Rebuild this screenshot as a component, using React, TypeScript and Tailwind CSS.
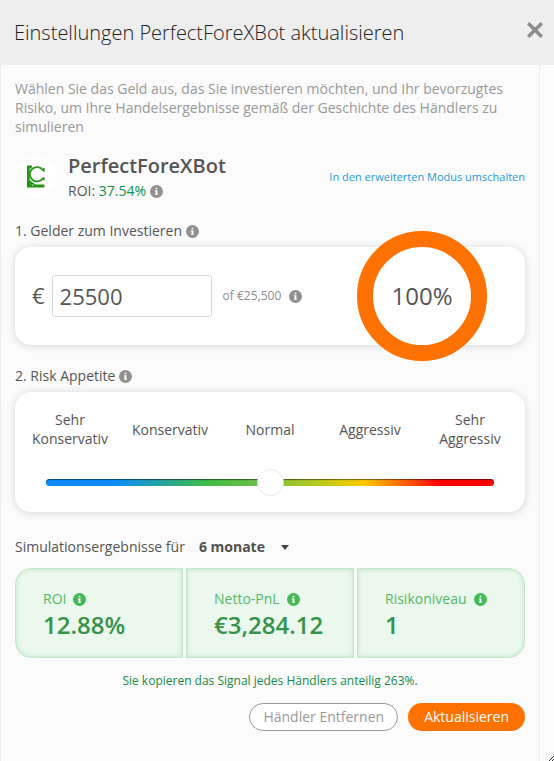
import { useState } from "react"

const riskLevels = ["Sehr Konservativ", "Konservativ", "Normal", "Aggressiv", "Sehr Aggressiv"]

const results = [
  { label: "ROI", value: "12.88%", shape: "rounded-l-2xl" },
  { label: "Netto-PnL", value: "€3,284.12", shape: "" },
  { label: "Risikoniveau", value: "1", shape: "rounded-r-2xl" },
]

function InfoIcon({ className = "text-[#909090]" }: { className?: string }) {
  return (
    <svg viewBox="0 0 13 13" className={`size-[13px] shrink-0 ${className}`} aria-hidden="true">
      <circle cx="6.5" cy="6.5" r="6.5" fill="currentColor" />
      <path d="M5.6 2.8h1.8v1.5H5.6zM5 5.3h2.4v3.4H8v1.1H5V8.7h.6V6.4H5z" fill="#fff" />
    </svg>
  )
}

function BotLogo() {
  return (
    <div className="flex size-[42px] shrink-0 items-center justify-center rounded-full bg-white">
      <svg viewBox="0 0 18 23" className="mb-[2px] h-[23px] w-[18px]" fill="none" aria-hidden="true">
        <path d="M0 .6h2.6v18.8h14.8v3H0z" fill="#249414" />
        <path d="M2 14.5l3 2.6 4 2.6H2z" fill="#249414" />
        <path d="M16.2 5.6A7.2 7.2 0 1 0 16.2 13" stroke="#2a981b" strokeWidth="1.8" />
        <path d="M16.8 3v3.8M16.8 12.2v3" stroke="#1c7a10" strokeWidth="1.4" />
        <path d="M2.4 4.4V.6h2.4v1.6z" fill="#1c7a10" />
        <path d="M5 20.2h1.4" stroke="#d4f0cc" />
      </svg>
    </div>
  )
}

export default function App() {
  const [amount, setAmount] = useState("25500")
  const [risk, setRisk] = useState(2)
  const [period, setPeriod] = useState("6")

  return (
    <div className="relative flex min-h-screen flex-col bg-[#fbfbfb] font-['Open_Sans','Noto_Sans',sans-serif] text-sm text-[#555]">
      <header className="flex h-[65px] items-center justify-between bg-[#eee] pr-[11px] pl-[14px]">
        <h1 className="text-xl font-light text-[#222]">Einstellungen PerfectForeXBot aktualisieren</h1>
        <button type="button" aria-label="Schließen" className="mb-[5px] text-[#8c8c8c]">
          <svg viewBox="0 0 16 16" className="size-4" stroke="currentColor" strokeWidth="3.4">
            <path d="M1.2 1.2l13.6 13.6M14.8 1.2L1.2 14.8" />
          </svg>
        </button>
      </header>

      <main className="mr-[14px] flex-1 border-x border-[#ececec] px-[14px] pt-[14px] pb-[30px]">
        <p className="leading-[19px] text-[#999]">
          Wählen Sie das Geld aus, das Sie investieren möchten, und Ihr bevorzugtes Risiko, um Ihre
          Handelsergebnisse gemäß der Geschichte des Händlers zu simulieren
        </p>

        <section className="mt-4 flex items-center">
          <BotLogo />
          <div className="ml-[11px]">
            <h2 className="text-xl leading-7 font-semibold">PerfectForeXBot</h2>
            <div className="flex items-center gap-1 leading-[22px]">
              <span>
                ROI: <span className="text-[#0f8f46]">37.54%</span>
              </span>
              <InfoIcon />
            </div>
          </div>
          <a href="#" className="ml-auto text-[11px] text-[#1e9bd7]">
            In den erweiterten Modus umschalten
          </a>
        </section>

        <div className="mt-[18px] flex items-center gap-1 leading-[22px]">
          <label htmlFor="amount">1. Gelder zum Investieren</label>
          <InfoIcon />
        </div>
        <div className="mt-[5px] flex h-[98px] items-center rounded-2xl bg-white pr-[38px] pl-[17px] shadow-[0_1px_8px_rgba(0,0,0,0.16)]">
          <span className="text-[22px]">€</span>
          <input
            id="amount"
            value={amount}
            onChange={(e) => setAmount(e.target.value)}
            className="ml-[7px] h-[42px] w-40 rounded-[3px] border border-[#cfd8da] bg-white px-[7px] text-[22px] outline-none"
          />
          <span className="mr-2 ml-[11px] text-xs text-[#8c8c8c]">of €25,500</span>
          <InfoIcon />
          <div className="-my-4 ml-auto flex size-[130px] shrink-0 items-center justify-center rounded-full border-[16px] border-[#ff7200] bg-white text-2xl">
            100%
          </div>
        </div>

        <div className="mt-5 flex items-center gap-1 leading-[22px]">
          <label htmlFor="risk">2. Risk Appetite</label>
          <InfoIcon />
        </div>
        <div className="mt-[5px] rounded-2xl bg-white px-[5px] pt-[18px] pb-4 shadow-[0_1px_8px_rgba(0,0,0,0.16)]">
          <div className="grid grid-cols-5 items-center text-center leading-[19px]">
            {riskLevels.map((level) => (
              <span key={level} className="px-2">
                {level}
              </span>
            ))}
          </div>
          <div className="mt-[21px] flex px-[26px]">
            <input
              id="risk"
              type="range"
              min={0}
              max={4}
              value={risk}
              onChange={(e) => setRisk(Number(e.target.value))}
              className="h-[27px] w-full appearance-none bg-transparent [&::-webkit-slider-runnable-track]:h-[7px] [&::-webkit-slider-runnable-track]:rounded-full [&::-webkit-slider-runnable-track]:bg-[linear-gradient(to_right,#0a8cff_15%,#3fbb45_36%,#6abf45_47%,#b5c81e_60%,#ffcb00_71%,#ff0000_88%)] [&::-webkit-slider-runnable-track]:shadow-[inset_0_1px_1px_rgba(0,0,0,0.5)] [&::-webkit-slider-thumb]:-mt-[10px] [&::-webkit-slider-thumb]:size-[27px] [&::-webkit-slider-thumb]:appearance-none [&::-webkit-slider-thumb]:rounded-full [&::-webkit-slider-thumb]:border [&::-webkit-slider-thumb]:border-[#e6e6f2] [&::-webkit-slider-thumb]:bg-white"
            />
          </div>
        </div>

        <div className="mt-[23px] flex items-center">
          <label htmlFor="period">Simulationsergebnisse für</label>
          <div className="relative ml-[14px]">
            <select
              id="period"
              value={period}
              onChange={(e) => setPeriod(e.target.value)}
              className="h-6 w-[92px] appearance-none bg-transparent font-bold text-[#505050]"
            >
              <option value="3">3 monate</option>
              <option value="6">6 monate</option>
              <option value="12">12 monate</option>
            </select>
            <svg viewBox="0 0 8 5" className="pointer-events-none absolute top-[10px] right-[2px] h-[5px] w-2" fill="#444">
              <path d="M0 0h8L4 5z" />
            </svg>
          </div>
        </div>

        <section className="mt-[9px] grid grid-cols-3 gap-[3px]">
          {results.map((r) => (
            <div
              key={r.label}
              className={`border border-[#c3e8ca] bg-[#eaf8ed] pt-5 pb-4 pl-[27px] shadow-[inset_0_0_4px_rgba(70,180,90,0.3)] ${r.shape}`}
            >
              <div className="flex items-center gap-[7px] leading-5 text-[#58b968]">
                {r.label}
                <InfoIcon className="text-[#43b955]" />
              </div>
              <div className="text-2xl leading-8 font-semibold text-[#38934a]">{r.value}</div>
            </div>
          ))}
        </section>

        <p className="mt-[14px] text-center text-xs leading-[18px] text-[#168a48]">
          Sie kopieren das Signal jedes Händlers anteilig 263%.
        </p>

        <div className="mt-[13px] flex justify-end gap-[10px]">
          <button type="button" className="h-7 rounded-full border border-[#999] bg-white px-[13px] text-[#999]">
            Händler Entfernen
          </button>
          <button type="button" className="h-7 rounded-full bg-[#ff7200] px-4 font-medium text-white">
            Aktualisieren
          </button>
        </div>
      </main>

      <svg viewBox="0 0 5 5" className="absolute right-0 bottom-0 size-[5px]" stroke="#333" aria-hidden="true">
        <path d="M0 5l5-5M3 5l2-2" />
      </svg>
    </div>
  )
}
